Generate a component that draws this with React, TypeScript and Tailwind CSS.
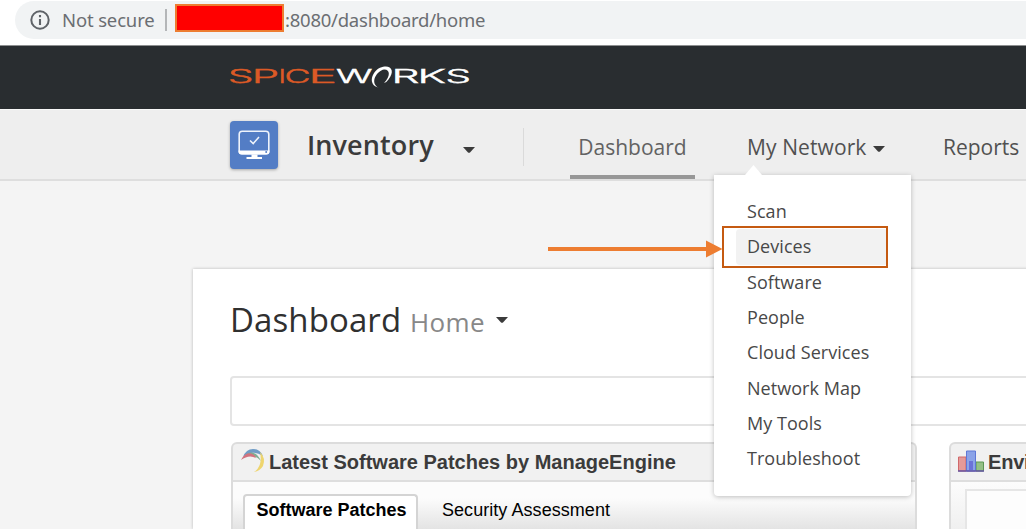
import React from "react";

const sans = "font-['Open_Sans','Noto_Sans',sans-serif]";
const arial = "font-['Liberation_Sans',Arial,sans-serif]";

function Caret({ className = "" }: { className?: string }) {
  return (
    <svg className={className} width="12" height="6" viewBox="0 0 12 6">
      <path d="M0 0H12L7 5.4Q6 6 5 5.4Z" fill="#3b3b3b" />
    </svg>
  );
}

function AddressBar() {
  return (
    <div className="h-[45px] bg-white pl-[15px] pt-px">
      <div className="flex h-[38px] items-center rounded-l-full bg-[#f1f3f4] text-[#6b6e72]">
        <svg className="ml-[15px] shrink-0" width="20" height="20" viewBox="0 0 20 20" fill="none">
          <circle cx="10" cy="10" r="8.7" stroke="#5f6368" strokeWidth="2" />
          <path d="M10 9V15M10 5V7.2" stroke="#5f6368" strokeWidth="2.1" />
        </svg>
        <span className="ml-[12px] w-[103px] whitespace-nowrap font-['Noto_Sans',sans-serif] text-[18.5px] tracking-[-0.15px]">Not secure</span>
        <span className="-mt-px h-[22px] w-[2px] bg-[#b4b6b8]" />
        <span className="-mt-[4px] ml-[8px] h-[28px] w-[109px] border-2 border-[#ed7d31] bg-[#ff0000]" />
        <span className="ml-px whitespace-nowrap font-['Noto_Sans',sans-serif] text-[18.5px] tracking-[-0.24px]">:8080/dashboard/home</span>
      </div>
    </div>
  );
}

const logoLetters = [
  { c: "S", x: -2, w: 25.5, fill: "#dc5a26" },
  { c: "P", x: 21.8, w: 27.5, fill: "#dc5a26" },
  { c: "I", x: 48.5, w: 7.5, fill: "#dc5a26" },
  { c: "C", x: 54.5, w: 26, fill: "#dc5a26" },
  { c: "E", x: 78.5, w: 28.5, fill: "#dc5a26" },
  { c: "W", x: 106, w: 36.5, fill: "#fff" },
  { c: "R", x: 161.5, w: 28, fill: "#fff" },
  { c: "K", x: 187.5, w: 28.5, fill: "#fff" },
  { c: "S", x: 215.5, w: 25.5, fill: "#fff" },
];

function Logo() {
  return (
    <svg width="242" height="30" viewBox="0 0 242 30" className="overflow-visible font-['Inter',sans-serif] font-light" fontSize="18.5" aria-label="Spiceworks">
      {logoLetters.map((l) => (
        <text key={l.x} x={l.x} y="20" fill={l.fill} stroke={l.fill} strokeWidth="0.4" textLength={l.w} lengthAdjust="spacingAndGlyphs">
          {l.c}
        </text>
      ))}
      <path d="M149 24.8C137 22 142 8.5 150 4.8C160 0.5 166 7 158.500 16.5Q157 19 154 20C161 13 160 6 154 6.4C147 7.500 139 20 149 24.8Z" fill="#fff" />
    </svg>
  );
}

function MonitorIcon() {
  return (
    <div className="h-12 w-12 rounded-[4px] bg-[#537dc5] shadow-[0_1px_3px_rgba(0,0,0,0.3)]">
      <svg width="48" height="48" viewBox="0 0 48 48" fill="none">
        <rect x="9.2" y="10.3" width="29.6" height="22.4" rx="3" stroke="#eef3fb" strokeWidth="1.6" />
        <path d="M8.5 29.5H39.5V30.5Q39.5 33.500 36.5 33.500H11.5Q8.5 33.500 8.5 30.5Z" fill="#fff" />
        <path d="M21.5 33.500H27.5V36H32V38H16.5V36H21.5Z" fill="#fff" />
        <circle cx="36.2" cy="31" r="1" fill="#537dc5" />
        <path d="M20 19.500L23.2 22.5L29 16" stroke="#eef3fb" strokeWidth="1.6" />
      </svg>
    </div>
  );
}

const items = ["Scan", "Devices", "Software", "People", "Cloud Services", "Network Map", "My Tools", "Troubleshoot"];

function NetworkMenu() {
  return (
    <div className="absolute left-[714px] top-[175px] h-[321px] w-[197px] rounded-b-[4px] bg-white pt-[19px] shadow-[0_1px_5px_rgba(0,0,0,0.25)]">
      <svg className="absolute left-[31px] top-[-10px]" width="17" height="10" viewBox="0 0 17 10">
        <path d="M0 10L8.5 0L17 10Z" fill="#fff" />
      </svg>
      <ul className="pl-[22px] pr-[23px]">
        {items.map((item) => (
          <li key={item} className={`flex h-[35.3px] items-center rounded-[4px] pl-[11px] text-[18px] tracking-[0.05px] text-[#484848] ${item === "Devices" ? "bg-[#f2f2f2]" : ""}`}>
            {item}
          </li>
        ))}
      </ul>
    </div>
  );
}

function Annotation() {
  return (
    <>
      <div className="absolute left-[722px] top-[226px] h-[42px] w-[166px] border-2 border-[#c55a11]" />
      <svg className="absolute left-[548px] top-[240px]" width="175" height="18" viewBox="0 0 175 18">
        <path d="M0 7H158V.5L174.5 9L158 17.5V11H0Z" fill="#ed7d31" />
      </svg>
    </>
  );
}

function PatchesPanel() {
  return (
    <section className="h-[92px] w-[686px] shrink-0 rounded-t-[6px] border-2 border-b-0 border-[#dcdcdc] bg-[#f1f1f1]">
      <div className="flex h-[38px] items-center border-b-2 border-[#dedede] pl-[8px]">
        <svg className="-mt-[4px]" width="25" height="25" viewBox="0 0 25 25" fill="none">
          <path d="M2 9Q5 1 12 1Q19 1 22 8Q16 4 10 5Q5 6 2 9Z" fill="#6f9cc6" />
          <path d="M4 7Q14 0 20 13Q14 6 4 8Z" fill="#7fae93" />
          <path d="M0 12Q4 4 10 5.5Q14 6.5 15 10Q8 6 0 12Z" fill="#d2727e" />
          <path d="M19 4Q25 10 22 18Q19 23 13 24Q22 18 19 4Z" fill="#eed56e" />
        </svg>
        <h2 className="ml-[3px] whitespace-nowrap text-[20px] font-bold leading-6 text-[#3b3b3b]">Latest Software Patches by ManageEngine</h2>
      </div>
      <div className="flex h-[54px] items-start bg-linear-to-b from-[#fcfcfc] from-30% to-[#dedede] pl-[10px] pt-[12px] text-[18px] text-black">
        <div className="flex h-[42px] w-[175px] items-start justify-center whitespace-nowrap rounded-t-[4px] border-2 border-b-0 border-[#d4d4d4] bg-white pl-[2px] pt-px font-bold">Software Patches</div>
        <div className="ml-[24px] whitespace-nowrap pt-[3px] tracking-[0.05px]">Security Assessment</div>
      </div>
    </section>
  );
}

function EnvironmentPanel() {
  return (
    <section className="h-[92px] w-[300px] shrink-0 rounded-t-[6px] border-2 border-b-0 border-[#dcdcdc] bg-[#f1f1f1]">
      <div className="flex h-[38px] items-center border-b-2 border-[#dedede] pl-[7px]">
        <svg className="-mt-[3px]" width="26" height="22" viewBox="0 0 26 22">
          <path d="M.5 7H8V21H.5Z" fill="#e59a98" stroke="#d0686a" />
          <path d="M18 12H25.5V21H18Z" fill="#94c086" stroke="#5b9655" />
          <path d="M8.5 1H17.5V21H8.5Z" fill="#8ba3e8" stroke="#5f78d6" />
          <path d="M11 11H15V20H11Z" fill="#6a72d8" />
          <path d="M0 21H26" stroke="#6554a3" strokeWidth="1.5" />
        </svg>
        <h2 className="ml-[4px] whitespace-nowrap text-[20px] font-bold leading-6 tracking-[-0.2px] text-[#3b3b3b]">Environment</h2>
      </div>
      <div className="h-[54px] bg-linear-to-b from-[#fcfcfc] to-[#eeeeee] pl-[14px] pt-[7px]">
        <div className="h-[47px] border-2 border-b-0 border-[#e6e6e6] bg-[#fdfdfd]" />
      </div>
    </section>
  );
}

export default function App() {
  return (
    <div className={`relative h-[529px] w-[1026px] overflow-hidden bg-[#f4f4f4] ${sans}`}>
      <AddressBar />
      <header className="h-[64px] border-t border-[#8d8f90] bg-[#292d30] pl-[230px] pt-[17px]">
        <Logo />
      </header>
      <nav className="flex h-[72px] items-start border-b-2 border-t border-b-[#dedede] border-t-[#f9f9f9] bg-[#eeeeee] pl-[230px]">
        <div className="mt-[11px]"><MonitorIcon /></div>
        <div className="ml-[29px] mt-[16px] w-[156px] whitespace-nowrap text-[27px] font-semibold leading-[38px] tracking-[0.1px] text-[#3b3b3b]">Inventory</div>
        <Caret className="mt-[37px]" />
        <div className="ml-[48px] mt-[18px] h-[38px] w-px bg-[#dadada]" />
        <div className="ml-[46px] h-[69px] w-[125px] border-b-4 border-[#979797] pt-[22px] text-center text-[21px] leading-[30px] text-[#626262]">Dashboard</div>
        <div className="ml-[52px] mt-[22px] w-[126px] whitespace-nowrap text-[21px] leading-[30px] tracking-[0.1px] text-[#515151]">My Network</div>
        <Caret className="mt-[36px]" />
        <div className="ml-[58px] mt-[22px] whitespace-nowrap text-[21px] leading-[30px] text-[#515151]">Reports</div>
      </nav>
      <main className="ml-[193px] mt-[88px] h-[260px] w-[900px] bg-white pl-[37px] pt-[29px] shadow-[0_0_3px_rgba(0,0,0,0.25)]">
        <div className="flex h-[44px] items-baseline whitespace-nowrap">
          <h1 className="w-[180px] text-[33px] leading-[44px] tracking-[0.1px] text-[#303030]">Dashboard</h1>
          <span className="w-[86px] text-[26px] tracking-[0.4px] text-[#888]">Home</span>
          <Caret className="mt-[19px] self-start" />
        </div>
        <div className="mt-[34px] h-[50px] rounded-[4px] border-2 border-[#e4e4e4]" />
        <div className={`ml-px mt-[16px] flex gap-[32px] ${arial}`}>
          <PatchesPanel />
          <EnvironmentPanel />
        </div>
      </main>
      <NetworkMenu />
      <Annotation />
    </div>
  );
}
